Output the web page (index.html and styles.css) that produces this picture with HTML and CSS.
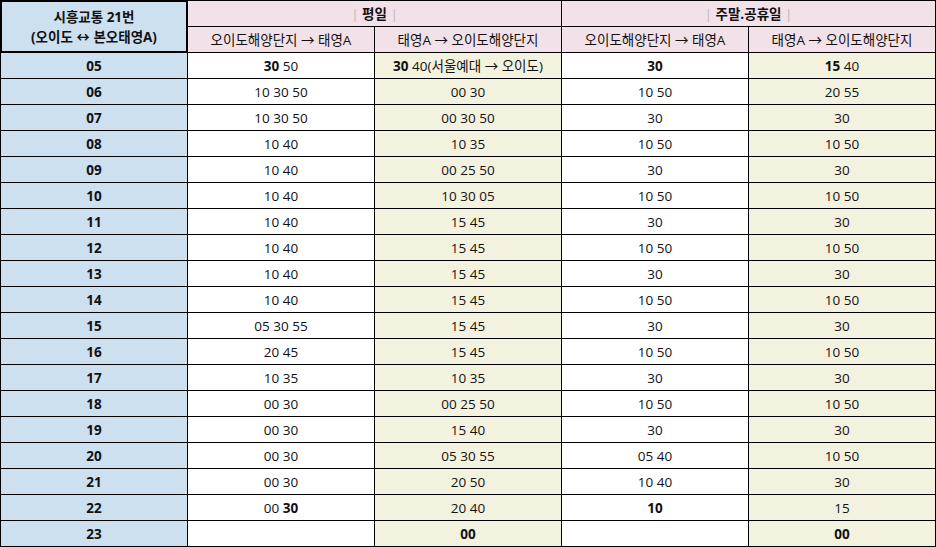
FILE: index.html
```html
<!DOCTYPE html>
<html lang="ko">
<head>
<meta charset="utf-8">
<title>시흥교통 21번 시간표</title>
<link rel="stylesheet" href="styles.css">
</head>
<body>
<div class="tt">
  <div class="c corner">시흥교통 21번<br>(오이도 ↔ 본오태영A)</div>
  <div class="c ph top span2"><span class="pipe">|</span>&nbsp;<b>평일</b>&nbsp;<span class="pipe">|</span></div>
  <div class="c ph top span2"><span class="pipe">|</span>&nbsp;<b>주말.공휴일</b>&nbsp;<span class="pipe">|</span></div>
  <div class="c ph">오이도해양단지 → 태영A</div>
  <div class="c ph">태영A → 오이도해양단지</div>
  <div class="c ph">오이도해양단지 → 태영A</div>
  <div class="c ph">태영A → 오이도해양단지</div>

  <div class="c rh">05</div><div class="c w"><b>30</b>&nbsp;50</div><div class="c y"><b>30</b>&nbsp;40(서울예대 → 오이도)</div><div class="c w"><b>30</b></div><div class="c y"><b>15</b>&nbsp;40</div>
  <div class="c rh">06</div><div class="c w">10 30 50</div><div class="c y">00 30</div><div class="c w">10 50</div><div class="c y">20 55</div>
  <div class="c rh">07</div><div class="c w">10 30 50</div><div class="c y">00 30 50</div><div class="c w">30</div><div class="c y">30</div>
  <div class="c rh">08</div><div class="c w">10 40</div><div class="c y">10 35</div><div class="c w">10 50</div><div class="c y">10 50</div>
  <div class="c rh">09</div><div class="c w">10 40</div><div class="c y">00 25 50</div><div class="c w">30</div><div class="c y">30</div>
  <div class="c rh">10</div><div class="c w">10 40</div><div class="c y">10 30 05</div><div class="c w">10 50</div><div class="c y">10 50</div>
  <div class="c rh">11</div><div class="c w">10 40</div><div class="c y">15 45</div><div class="c w">30</div><div class="c y">30</div>
  <div class="c rh">12</div><div class="c w">10 40</div><div class="c y">15 45</div><div class="c w">10 50</div><div class="c y">10 50</div>
  <div class="c rh">13</div><div class="c w">10 40</div><div class="c y">15 45</div><div class="c w">30</div><div class="c y">30</div>
  <div class="c rh">14</div><div class="c w">10 40</div><div class="c y">15 45</div><div class="c w">10 50</div><div class="c y">10 50</div>
  <div class="c rh">15</div><div class="c w">05 30 55</div><div class="c y">15 45</div><div class="c w">30</div><div class="c y">30</div>
  <div class="c rh">16</div><div class="c w">20 45</div><div class="c y">15 45</div><div class="c w">10 50</div><div class="c y">10 50</div>
  <div class="c rh">17</div><div class="c w">10 35</div><div class="c y">10 35</div><div class="c w">30</div><div class="c y">30</div>
  <div class="c rh">18</div><div class="c w">00 30</div><div class="c y">00 25 50</div><div class="c w">10 50</div><div class="c y">10 50</div>
  <div class="c rh">19</div><div class="c w">00 30</div><div class="c y">15 40</div><div class="c w">30</div><div class="c y">30</div>
  <div class="c rh">20</div><div class="c w">00 30</div><div class="c y">05 30 55</div><div class="c w">05 40</div><div class="c y">10 50</div>
  <div class="c rh">21</div><div class="c w">00 30</div><div class="c y">20 50</div><div class="c w">10 40</div><div class="c y">30</div>
  <div class="c rh">22</div><div class="c w">00&nbsp;<b>30</b></div><div class="c y">20 40</div><div class="c w"><b>10</b></div><div class="c y">15</div>
  <div class="c rh">23</div><div class="c w"></div><div class="c y"><b>00</b></div><div class="c w"></div><div class="c y"><b>00</b></div>
</div>
</body>
</html>
```

FILE: styles.css
```css
html, body {
  margin: 0;
  padding: 0;
  background: #ffffff;
}

.tt {
  display: grid;
  grid-template-columns: 188px 187px 187px 187px 187px;
  grid-template-rows: 27px 26px repeat(19, 26px);
  width: 936px;
  font-family: "Open Sans", "Noto Sans CJK KR", sans-serif;
  font-size: 13.5px;
  color: #111111;
}

.c {
  box-sizing: border-box;
  display: flex;
  align-items: center;
  justify-content: center;
  padding-top: 1px;
  border-right: 1px solid #000;
  border-bottom: 1px solid #000;
  white-space: nowrap;
  line-height: 18px;
}

.c b {
  font-weight: 700;
}

.corner {
  grid-row: 1 / span 2;
  grid-column: 1;
  border: 2px solid #000;
  background: #cce0f0;
  font-weight: 700;
  text-align: center;
  line-height: 20px;
}

.top {
  border-top: 1px solid #000;
}

.span2 {
  grid-column: span 2;
}

.ph {
  background: #f2e1e8;
}

.pipe {
  color: #c2b9b2;
  font-weight: 400;
}

.rh {
  background: #cce0f0;
  border-left: 1px solid #000;
  font-weight: 700;
}

.w {
  background: #ffffff;
}

.y {
  background: #f3f2df;
}
```
